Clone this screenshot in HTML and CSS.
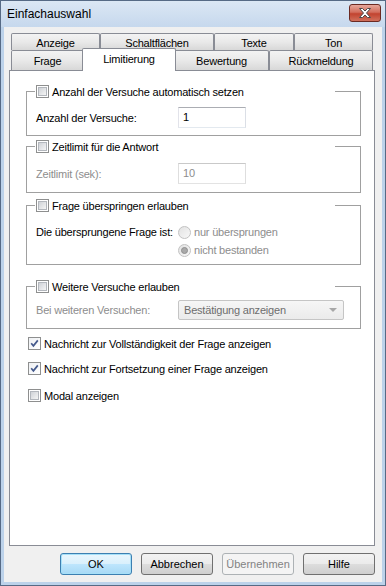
FILE: index.html
```html
<!DOCTYPE html>
<html lang="de">
<head>
    <meta charset="UTF-8">
    <title>Einfachauswahl</title>
    <link rel="stylesheet" href="styles.css">
</head>
<body>
    <div class="window">
        <div class="titlebar">
            <span class="title">Einfachauswahl</span>
            <span class="close">
                <svg width="14" height="10" viewBox="0 0 14 10"><path d="M1.5 0.5 H4.5 L7 3 L9.5 0.5 H12.5 L8.5 5 L12.5 9.5 H9.5 L7 7 L4.5 9.5 H1.5 L5.5 5 Z" fill="#fff" stroke="#4b4b4b" stroke-width="1"/></svg>
            </span>
        </div>
        <div class="client">
            <div class="tabs">
                <div class="tab-row">
                    <div class="tab w-anzeige">Anzeige</div>
                    <div class="tab w-schalt">Schaltflächen</div>
                    <div class="tab w-texte">Texte</div>
                    <div class="tab w-ton">Ton</div>
                </div>
                <div class="tab-row front">
                    <div class="tab w-frage">Frage</div>
                    <div class="tab active w-limit">Limitierung</div>
                    <div class="tab w-bewert">Bewertung</div>
                    <div class="tab w-rueck">Rückmeldung</div>
                </div>
            </div>

            <div class="panel">
                <fieldset class="group g1">
                    <legend><span class="check"><span class="cb"></span>Anzahl der Versuche automatisch setzen</span></legend>
                    <div class="row">
                        <span class="lbl">Anzahl der Versuche:</span>
                        <span class="input">1</span>
                    </div>
                </fieldset>

                <fieldset class="group g2">
                    <legend><span class="check"><span class="cb"></span>Zeitlimit für die Antwort</span></legend>
                    <div class="row">
                        <span class="lbl disabled">Zeitlimit (sek):</span>
                        <span class="input disabled">10</span>
                    </div>
                </fieldset>

                <fieldset class="group g3">
                    <legend><span class="check"><span class="cb"></span>Frage überspringen erlauben</span></legend>
                    <div class="row top">
                        <span class="lbl">Die übersprungene Frage ist:</span>
                        <div class="radios">
                            <span class="radio-row"><span class="rb"></span>nur übersprungen</span>
                            <span class="radio-row"><span class="rb on"></span>nicht bestanden</span>
                        </div>
                    </div>
                </fieldset>

                <fieldset class="group g4">
                    <legend><span class="check"><span class="cb"></span>Weitere Versuche erlauben</span></legend>
                    <div class="row">
                        <span class="lbl disabled">Bei weiteren Versuchen:</span>
                        <span class="combo">Bestätigung anzeigen<span class="arrow"></span></span>
                    </div>
                </fieldset>

                <div class="checks">
                    <span class="check"><span class="cb on"><svg width="9" height="9" viewBox="0 0 9 9"><path d="M1.2 4.2 L3.4 6.8 L7.8 1.4" fill="none" stroke="#44598c" stroke-width="1.7"/></svg></span>Nachricht zur Vollständigkeit der Frage anzeigen</span>
                    <span class="check"><span class="cb on"><svg width="9" height="9" viewBox="0 0 9 9"><path d="M1.2 4.2 L3.4 6.8 L7.8 1.4" fill="none" stroke="#44598c" stroke-width="1.7"/></svg></span>Nachricht zur Fortsetzung einer Frage anzeigen</span>
                    <span class="check last"><span class="cb"></span>Modal anzeigen</span>
                </div>
            </div>

            <div class="buttons">
                <button class="btn default">OK</button>
                <button class="btn">Abbrechen</button>
                <button class="btn" disabled>Übernehmen</button>
                <button class="btn">Hilfe</button>
            </div>
        </div>
    </div>
</body>
</html>
```

FILE: styles.css
```css
body {
    margin: 0;
    font-family: "Liberation Sans", Arial, sans-serif;
    font-size: 11px;
    letter-spacing: -0.2px;
    color: #000;
}
.window {
    width: 386px;
    height: 586px;
    box-sizing: border-box;
    border: 1px solid #566a85;
    background: #bcd2ea;
    display: flex;
    flex-direction: column;
}
.titlebar {
    height: 26px;
    display: flex;
    align-items: center;
    justify-content: space-between;
    padding: 0 4px 0 6px;
    background: linear-gradient(#dbe7f4, #c6d8ed);
}
.title {
    font-size: 12px;
    letter-spacing: 0;
}
.close {
    width: 30px;
    height: 16px;
    margin-top: -2px;
    border: 1px solid #6b2a22;
    border-radius: 3px;
    background: linear-gradient(#e6a79b, #d36e5d 45%, #c2432f 55%, #d0705c);
    display: flex;
    align-items: center;
    justify-content: center;
}
.client {
    flex: 1;
    margin: 0 3px 3px;
    background: #f0f0f0;
    padding: 6px 0 0 5px;
}
.tabs {
    padding-left: 2px;
}
.tab-row {
    display: flex;
    height: 17px;
    align-items: flex-end;
}
.tab-row.front {
    height: 20px;
}
.tab {
    box-sizing: border-box;
    height: 17px;
    padding-top: 3px;
    line-height: 13px;
    text-align: center;
    white-space: nowrap;
    border: 1px solid #898c95;
    border-bottom: none;
    border-radius: 2px 2px 0 0;
    background: linear-gradient(#f3f3f3, #e9e9e9 50%, #d8d8d8);
}
.front .tab {
    height: 20px;
    padding-top: 4px;
}
.front .tab.active {
    position: relative;
    z-index: 1;
    height: 23px;
    margin: 0 -2px -1px;
    background: #fff;
}
.w-anzeige { width: 89px; }
.w-schalt { width: 114px; }
.w-texte { width: 80px; }
.w-ton { width: 79px; }
.w-frage { width: 73px; }
.w-limit { width: 94px; }
.w-bewert { width: 95px; }
.w-rueck { width: 104px; }

.panel {
    box-sizing: border-box;
    width: 366px;
    height: 476px;
    border: 1px solid #898c95;
    background: #fff;
    padding: 14px 13px 0 16px;
}
.group {
    margin: 0;
    border: 1px solid #a0a0a0;
    padding: 9px 8px 7px 9px;
}
.group legend {
    width: 298px;
    padding: 0 1px;
    margin-left: -1px;
    height: 13px;
}
.g2 { margin-top: 4px; padding-top: 10px; padding-bottom: 8px; }
.g3 { margin-top: 6px; padding-top: 11px; padding-bottom: 5px; }
.g4 { margin-top: 15px; padding-top: 7px; padding-bottom: 8px; }

.check {
    display: flex;
    align-items: center;
    height: 13px;
    white-space: nowrap;
}
.cb {
    box-sizing: border-box;
    width: 13px;
    height: 13px;
    margin-right: 3px;
    border: 1px solid #8e8f8f;
    padding: 1px;
    background: #fff;
    display: flex;
    flex-shrink: 0;
}
.cb::before {
    content: "";
    flex: 1;
    border: 1px solid #b3b7bd;
    background: linear-gradient(135deg, #cfd2d7, #f5f5f5);
}
.cb.on::before {
    display: none;
}
.cb.on {
    padding: 0;
    background: linear-gradient(135deg, #eef0f3, #fff);
    align-items: center;
    justify-content: center;
}

.row {
    display: flex;
    align-items: center;
}
.row.top {
    align-items: flex-start;
}
.lbl {
    width: 142px;
    flex-shrink: 0;
    line-height: 18px;
    white-space: nowrap;
}
.disabled {
    color: #8d8d8d;
}
.input {
    box-sizing: border-box;
    width: 68px;
    height: 21px;
    line-height: 19px;
    padding-left: 4px;
    border: 1px solid #abadb3;
    border-color: #abadb3 #dbdfe6 #e3e9ef #e2e3ea;
    background: #fff;
}
.input.disabled {
    border-color: #c9c9c9 #dedede #e3e3e3 #dedede;
}
.radios {
    display: flex;
    flex-direction: column;
}
.radio-row {
    display: flex;
    align-items: center;
    height: 18px;
    color: #8d8d8d;
    white-space: nowrap;
}
.rb {
    box-sizing: border-box;
    width: 13px;
    height: 13px;
    margin-right: 3px;
    border: 1px solid #c2c2c2;
    border-radius: 50%;
    background: linear-gradient(135deg, #e2e2e2, #f8f8f8);
    display: flex;
    align-items: center;
    justify-content: center;
}
.rb.on::before {
    content: "";
    width: 5px;
    height: 5px;
    border-radius: 50%;
    background: #a9a9a9;
    border: 1px solid #8f8f8f;
}
.combo {
    box-sizing: border-box;
    width: 166px;
    height: 20px;
    padding-left: 5px;
    border: 1px solid #c5c5c5;
    border-radius: 2px;
    background: linear-gradient(#f6f6f6, #ebebeb);
    color: #6d6d6d;
    display: flex;
    align-items: center;
    justify-content: space-between;
}
.arrow {
    width: 0;
    height: 0;
    margin-right: 6px;
    border-left: 4px solid transparent;
    border-right: 4px solid transparent;
    border-top: 4px solid #a7a7a7;
}

.checks {
    margin: 8px 0 0 2px;
    display: flex;
    flex-direction: column;
    gap: 12px;
}
.checks .last {
    margin-top: 2px;
}

.buttons {
    display: flex;
    justify-content: flex-end;
    gap: 9px;
    margin-top: 7px;
    padding-right: 7px;
}
.btn {
    box-sizing: border-box;
    width: 72px;
    height: 22px;
    padding: 0;
    font: inherit;
    color: #000;
    border: 1px solid #707070;
    border-radius: 3px;
    background: linear-gradient(#f2f2f2, #ebebeb 50%, #dddddd 50%, #cfcfcf);
}
.btn.default {
    border-color: #3c7fb1;
    box-shadow: inset 0 0 0 1px #a6e0f8;
    background: linear-gradient(#eaf6fd, #d9f0fc 50%, #bee6fd 50%, #a7d9f5);
}
.btn:disabled {
    border-color: #adb2b5;
    background: #f4f4f4;
    color: #838383;
}
```
